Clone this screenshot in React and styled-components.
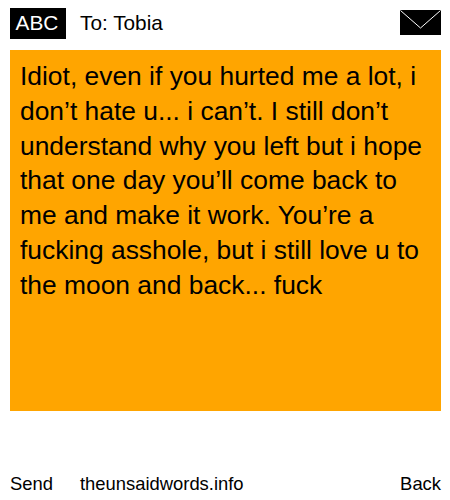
import React from 'react';
import styled, { createGlobalStyle } from 'styled-components';

const GlobalStyle = createGlobalStyle`
  html, body {
    margin: 0;
    padding: 0;
    background: #fff;
  }
`;

const Page = styled.div`
  width: 450px;
  height: 500px;
  box-sizing: border-box;
  padding: 8px 9px 0 10px;
  display: flex;
  flex-direction: column;
  font-family: "Liberation Sans", Arial, sans-serif;
  color: #000;
`;

const Header = styled.div`
  height: 31px;
  display: flex;
  align-items: center;
`;

const ModeBadge = styled.div`
  width: 56px;
  height: 31px;
  box-sizing: border-box;
  padding-right: 2px;
  background: #000;
  color: #fff;
  font-size: 20.8px;
  line-height: 30px;
  text-align: center;
`;

const Recipient = styled.div`
  margin-left: 14px;
  font-size: 20.8px;
  line-height: 30px;
  height: 31px;
  flex: 1;
`;

const Envelope = styled.svg`
  display: block;
  width: 41px;
  height: 25px;
  margin-top: -2px;
`;

const Message = styled.div`
  margin-top: 11px;
  height: 361px;
  box-sizing: border-box;
  padding: 9px 10px 0;
  background: #ffa500;
  font-size: 26.4px;
  line-height: 34.8px;
`;

const Footer = styled.div`
  margin-top: 62px;
  display: flex;
  font-size: 18.4px;
  line-height: 21px;
`;

const SendLink = styled.span`
  width: 70px;
`;

const SiteLink = styled.span`
  flex: 1;
`;

export default function App() {
  return (
    <Page>
      <GlobalStyle />
      <Header>
        <ModeBadge>ABC</ModeBadge>
        <Recipient>To: Tobia</Recipient>
        <Envelope viewBox="0 0 41 25">
          <rect width="41" height="25" fill="#000" />
          <path d="M0.5 0.5 L20.5 18 L40.5 0.5" fill="none" stroke="#fff" strokeWidth="1" />
        </Envelope>
      </Header>
      <Message>
        Idiot, even if you hurted me a lot, i don’t hate u... i can’t. I still don’t understand why you left but i hope that one day you’ll come back to me and make it work. You’re a fucking asshole, but i still love u to the moon and back... fuck
      </Message>
      <Footer>
        <SendLink>Send</SendLink>
        <SiteLink>theunsaidwords.info</SiteLink>
        <span>Back</span>
      </Footer>
    </Page>
  );
}
